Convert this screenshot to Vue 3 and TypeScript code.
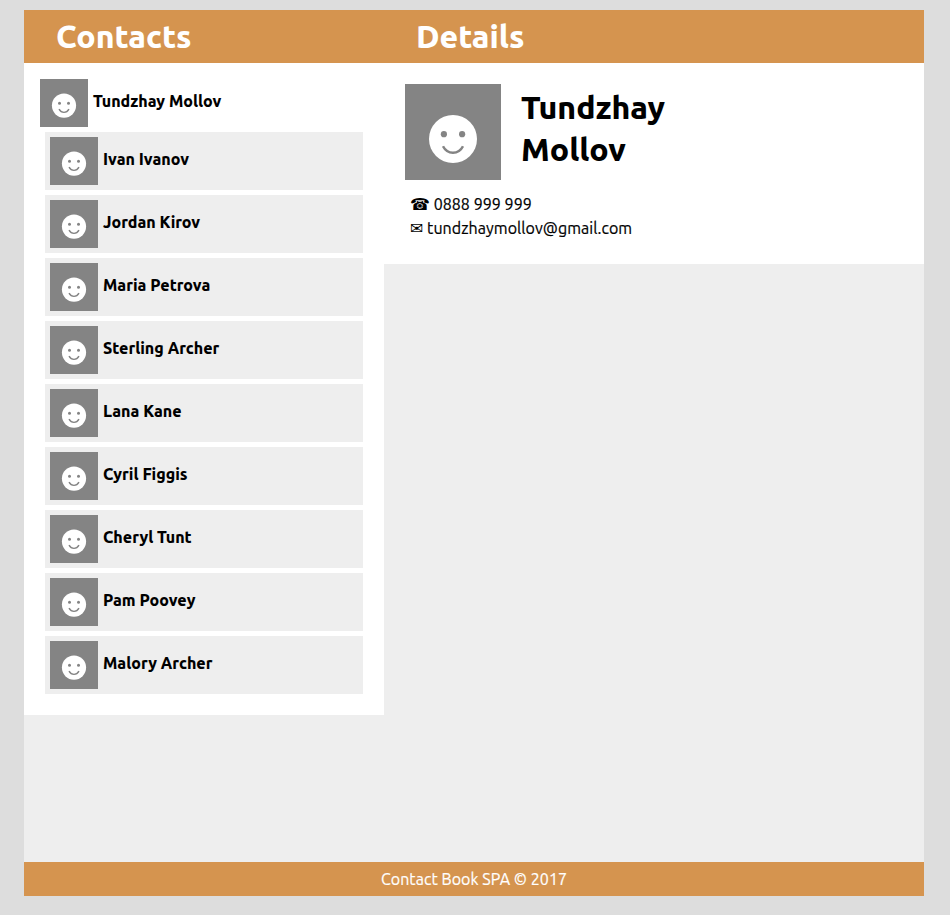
<script setup lang="ts">
import { ref, computed } from 'vue'

interface Contact {
  first: string
  last: string
  phone: string
  email: string
}

const make = (first: string, last: string): Contact => ({
  first,
  last,
  phone: '0888 999 999',
  email: `${first}${last}@gmail.com`.toLowerCase(),
})

const contacts: Contact[] = [
  make('Tundzhay', 'Mollov'),
  make('Ivan', 'Ivanov'),
  make('Jordan', 'Kirov'),
  make('Maria', 'Petrova'),
  make('Sterling', 'Archer'),
  make('Lana', 'Kane'),
  make('Cyril', 'Figgis'),
  make('Cheryl', 'Tunt'),
  make('Pam', 'Poovey'),
  make('Malory', 'Archer'),
]

const selected = ref(0)
const current = computed(() => contacts[selected.value])
</script>

<template>
  <div class="book">
    <header class="titles">
      <h1 class="title">Contacts</h1>
      <h1 class="title">Details</h1>
    </header>
    <main class="content">
      <section class="list">
        <div
          v-for="(c, i) in contacts"
          :key="i"
          class="contact"
          :class="{ active: i === selected }"
          @click="selected = i"
        >
          <svg class="avatar" viewBox="0 0 48 48">
            <circle cx="24" cy="26.6" r="12.1" fill="#fff" />
            <circle cx="19.5" cy="24.2" r="1.5" />
            <circle cx="28.5" cy="24.2" r="1.5" />
            <path d="M19 30.2Q20.8 33.4 24 33.4T29 30.2" />
          </svg>
          <span class="name">{{ c.first }} {{ c.last }}</span>
        </div>
      </section>
      <section class="details">
        <div class="person">
          <svg class="portrait" viewBox="0 0 96 96">
            <circle cx="48" cy="55" r="24" fill="#fff" />
            <circle cx="38.9" cy="50.2" r="3.1" />
            <circle cx="57.1" cy="50.2" r="3.1" />
            <path d="M38 62.3C42.4 70.9 53.6 70.9 58 62.3" />
          </svg>
          <h2 class="fullname">
            <span>{{ current.first }}</span>
            <span>{{ current.last }}</span>
          </h2>
        </div>
        <div class="info">
          <span class="symbol">☎</span><span class="value">{{ current.phone }}</span>
        </div>
        <div class="info">
          <span class="symbol">✉</span><span class="value">{{ current.email }}</span>
        </div>
      </section>
    </main>
    <footer class="footer">Contact Book SPA © 2017</footer>
  </div>
</template>

<style>
body {
  background: #ddd;
}
</style>

<style scoped>
.book {
  display: flex;
  flex-direction: column;
  box-sizing: border-box;
  width: 900px;
  height: 886px;
  margin: 10px 0 0 24px;
  background: #eee;
  color: #000;
  font-family: Ubuntu, "Noto Sans", "Open Sans", sans-serif;
  font-size: 16px;
}
.titles {
  display: grid;
  grid-template-columns: 360px 540px;
  height: 53px;
  background: #d5944f;
  color: #fff;
}
.title {
  margin: 0;
  padding-left: 32px;
  font-size: 32px;
  line-height: 53px;
  font-weight: 800;
}
.content {
  display: flex;
  flex: 1;
  align-items: flex-start;
}
.list {
  box-sizing: border-box;
  width: 360px;
  padding: 16px 16px 21px;
  background: #fff;
}
.contact {
  display: flex;
  gap: 5px;
  margin: 5px 5px 0;
  padding: 5px;
  background: #eee;
  cursor: pointer;
}
.contact.active {
  margin: 0;
  padding: 0;
  background: #fff;
}
.avatar,
.portrait {
  flex: none;
  width: 48px;
  height: 48px;
  background: #848484;
  fill: #848484;
}
.portrait {
  width: 96px;
  height: 96px;
}
.avatar path,
.portrait path {
  fill: none;
  stroke: #848484;
  stroke-width: 1.4;
}
.portrait path {
  stroke-width: 2.5;
}
.name {
  line-height: 44px;
  font-weight: 800;
  white-space: nowrap;
}
.details {
  box-sizing: border-box;
  width: 540px;
  height: 201px;
  padding: 21px 21px 0;
  background: #fff;
}
.person {
  display: flex;
  gap: 20px;
  height: 108px;
}
.fullname {
  display: flex;
  flex-direction: column;
  margin: 2px 0 0;
  font-size: 32px;
  font-weight: 800;
  line-height: 42px;
}
.info {
  display: flex;
  gap: 3.7px;
  height: 24px;
  padding-left: 5px;
  line-height: 24px;
}
.symbol {
  padding-top: 1px;
  font-family: "DejaVu Sans", sans-serif;
}
.value,
.footer {
  letter-spacing: 0.05px;
  -webkit-text-stroke: 0.2px currentColor;
}
.footer {
  height: 34px;
  background: #d5944f;
  color: #fff;
  line-height: 34px;
  text-align: center;
}
</style>
